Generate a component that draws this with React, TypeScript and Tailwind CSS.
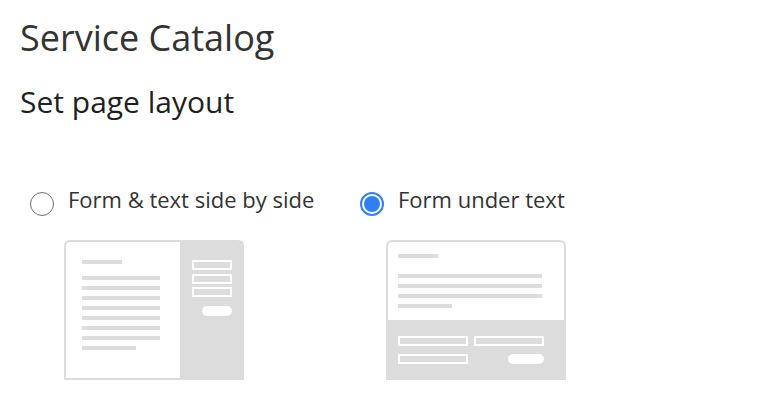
import { useState } from 'react';

type Layout = 'side' | 'under';

function Radio({ checked }: { checked: boolean }) {
    if (checked) {
        return (
            <span className="mt-[8px] flex h-6 w-6 shrink-0 items-center justify-center rounded-full border-2 border-[#2f7ff5] bg-white">
                <span className="h-4 w-4 rounded-full bg-[#2f7ff5]" />
            </span>
        );
    }
    return <span className="mt-[8px] h-6 w-6 shrink-0 rounded-full border-[1.5px] border-[#6f6f6f] bg-white" />;
}

function SideBySideThumb() {
    return (
        <svg width="180" height="140" viewBox="0 0 180 140" className="block">
            <path d="M0 6 Q0 0 6 0 H174 Q180 0 180 6 V140 H0 Z" fill="#dcdcdc" />
            <path d="M2 6 Q2 2 6 2 H116 V138 H2 Z" fill="#ffffff" />
            {/* text lines */}
            <rect x="18" y="20" width="40" height="4" fill="#dcdcdc" />
            {[36, 46, 56, 66, 76, 86, 96].map((y) => (
                <rect key={y} x="18" y={y} width="78" height="4" fill="#dcdcdc" />
            ))}
            <rect x="18" y="106" width="54" height="4" fill="#dcdcdc" />
            {/* form */}
            {[20, 34, 47].map((y) => (
                <rect key={y} x="129" y={y + 1} width="38" height="8" fill="none" stroke="#ffffff" strokeWidth="2" />
            ))}
            <rect x="138" y="66" width="30" height="10" rx="5" fill="#ffffff" />
        </svg>
    );
}

function UnderThumb() {
    return (
        <svg width="180" height="140" viewBox="0 0 180 140" className="block">
            <path d="M0 6 Q0 0 6 0 H174 Q180 0 180 6 V140 H0 Z" fill="#dcdcdc" />
            <path d="M2 6 Q2 2 6 2 H174 Q178 2 178 6 V80 H2 Z" fill="#ffffff" />
            {/* text lines */}
            <rect x="12" y="14" width="40" height="4" fill="#dcdcdc" />
            {[34, 44, 54].map((y) => (
                <rect key={y} x="12" y={y} width="144" height="4" fill="#dcdcdc" />
            ))}
            <rect x="12" y="64" width="54" height="4" fill="#dcdcdc" />
            {/* form */}
            <rect x="13" y="97" width="68" height="8" fill="none" stroke="#ffffff" strokeWidth="2" />
            <rect x="89" y="97" width="68" height="8" fill="none" stroke="#ffffff" strokeWidth="2" />
            <rect x="13" y="115" width="68" height="8" fill="none" stroke="#ffffff" strokeWidth="2" />
            <rect x="122" y="114" width="36" height="10" rx="5" fill="#ffffff" />
        </svg>
    );
}

export default function App() {
    const [layout, setLayout] = useState<Layout>('under');

    return (
        <div className="h-[418px] w-[774px] overflow-hidden bg-white pl-5 pt-[14px] text-[#333333] font-['Open_Sans',sans-serif]">
            <h1 className="text-[36px] leading-[48px] font-normal">Service Catalog</h1>
            <h2 className="mt-[20px] text-[30px] leading-[40px] font-normal text-[#1f1f1f]">Set page layout</h2>

            <div className="mt-[62px] flex">
                <button
                    type="button"
                    onClick={() => setLayout('side')}
                    className="flex w-[340px] flex-col items-start pl-[10px] text-left"
                >
                    <span className="flex items-start gap-[14px]">
                        <Radio checked={layout === 'side'} />
                        <span className="text-[22px] leading-[30px]">Form &amp; text side by side</span>
                    </span>
                    <span className="mt-[24px] ml-[34px]">
                        <SideBySideThumb />
                    </span>
                </button>

                <button
                    type="button"
                    onClick={() => setLayout('under')}
                    className="flex flex-col items-start text-left"
                >
                    <span className="flex items-start gap-[14px]">
                        <Radio checked={layout === 'under'} />
                        <span className="text-[22px] leading-[30px]">Form under text</span>
                    </span>
                    <span className="mt-[24px] ml-[26px]">
                        <UnderThumb />
                    </span>
                </button>
            </div>
        </div>
    );
}
